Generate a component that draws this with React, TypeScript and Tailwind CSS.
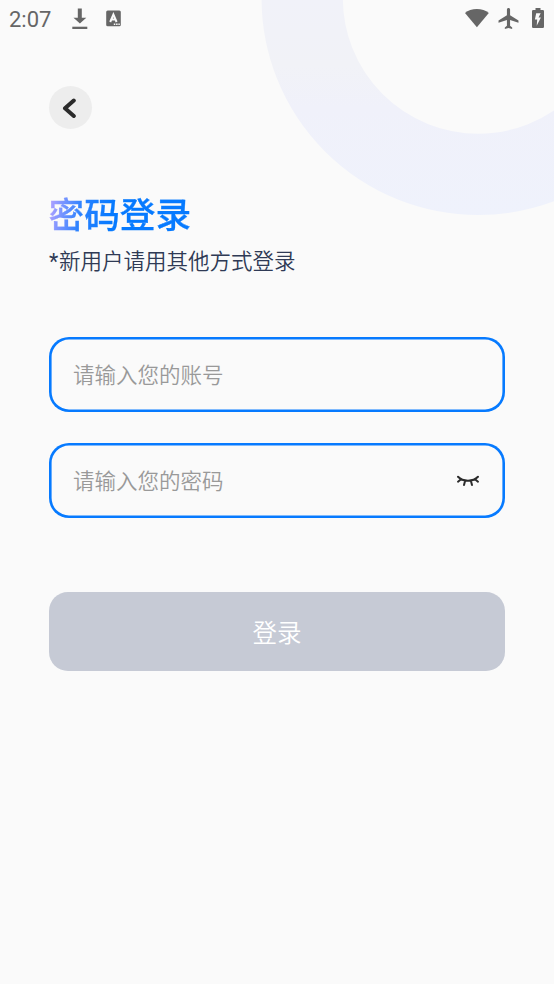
import { useState } from "react";

function StatusBar() {
  return (
    <div className="relative flex h-10 items-start text-[#666666]">
      <span className="ml-[9px] mt-1.5 w-[43px] font-[Roboto,sans-serif] text-[22px] leading-7">
        2:07
      </span>

      <svg className="ml-5 mt-2 h-[22px] w-4" viewBox="0 0 16 22" fill="currentColor">
        <path d="M5.800 0.500h4v9.200h4.500L7.900 15.600 1.500 9.700h4.300z" />
        <path d="M0.300 18.700h15v2.300h-15z" />
      </svg>

      <svg className="ml-[18px] mt-2.5 h-[17px] w-[15px]" viewBox="0 0 15 17">
        <rect x="0.2" y="0.4" width="14.6" height="15.8" rx="1.5" fill="currentColor" />
        <path d="M4.200 12L7.400 4.600 10.600 12M5.300 9.500h4.200" fill="none" stroke="#fafafa" strokeWidth="2" />
        <path d="M7.800 13.600h1.500v1.300H7.800zM10.100 13.600h1.500v1.300h-1.500zM12.400 13.600h1.400v1.300h-1.400z" fill="#fafafa" />
      </svg>

      <div className="ml-auto mr-[10px] mt-2 flex items-start">
        <svg className="h-5 w-[25px]" viewBox="0 0 25 20" fill="currentColor">
          <path d="M0 4.900C5.500 -0.200 18 -0.200 23.800 4.900L11.900 19.200z" />
        </svg>
        <svg className="ml-2 mr-px h-[21px] w-[21px]" viewBox="2 2 19 20" fill="currentColor">
          <path d="M21 16v-2l-8-5V3.500c0-.83-.67-1.500-1.500-1.500S10 2.670 10 3.500V9l-8 5v2l8-2.500V19l-2 1.500V22l3.500-1 3.500 1v-1.500L13 19v-5.500l8 2.500z" />
        </svg>
        <svg className="ml-3 h-5 w-3" viewBox="0 0 12 20" fill="currentColor">
          <path
            fillRule="evenodd"
            d="M3.500 0h5v2h2.300q1.200 0 1.200 1.200v15.600q0 1.200-1.200 1.200H1.200Q0 20 0 18.800V3.200Q0 2 1.200 2H3.500zM4.200 5.300L2.900 11.600H5.200L4.700 17.700 8.900 9.600H6.500L8.700 5.300z"
          />
        </svg>
      </div>
    </div>
  );
}

function Ring() {
  return (
    <svg className="pointer-events-none absolute right-0 top-0 h-[230px] w-[304px]" viewBox="250 0 304 230">
      <defs>
        <linearGradient id="ring" gradientUnits="userSpaceOnUse" x1="0" y1="0" x2="0" y2="215">
          <stop offset="0" stopColor="#f1f2f9" />
          <stop offset="0.3" stopColor="#f1f2f7" />
          <stop offset="0.5" stopColor="#f0f1fa" />
          <stop offset="1" stopColor="#eff2fc" />
        </linearGradient>
      </defs>
      <circle cx="478.2" cy="-1.7" r="176" fill="none" stroke="url(#ring)" strokeWidth="81.3" />
    </svg>
  );
}

function ClosedEye() {
  return (
    <svg
      className="h-3 w-6"
      viewBox="0 0 24 12"
      fill="none"
      stroke="#2b2b2b"
      strokeWidth="2"
      strokeLinecap="round"
    >
      <path d="M2 1.800C7 7 17 7 22 1.800M5 4.200L2 6.700M19 4.200L22 6.700M9.200 5.600L8 10M14.800 5.600L16 10" />
    </svg>
  );
}

const fieldClass =
  "flex h-[75px] items-center rounded-[20px] pl-6 pr-[25px] shadow-[inset_0_0_0_2.6px_#067aff]";
const inputClass =
  "min-w-0 flex-1 bg-transparent text-[21.5px] font-[350] text-[#222222] outline-none placeholder:text-[#999999]";

function App() {
  const [account, setAccount] = useState("");
  const [password, setPassword] = useState("");
  const [visible, setVisible] = useState(false);

  return (
    <div className="relative h-[984px] w-[554px] overflow-hidden bg-[#fafafa] font-['Noto_Sans_CJK_SC',sans-serif]">
      <Ring />
      <StatusBar />

      <main className="relative px-[49px] pt-[46px]">
        <button className="flex h-[43px] w-[43px] items-center justify-center rounded-full bg-[#ededed]">
          <svg
            className="mr-[3px] h-5 w-3.5"
            viewBox="0 0 14 20"
            fill="none"
            stroke="#2b2b2b"
            strokeWidth="4"
            strokeLinecap="round"
            strokeLinejoin="round"
          >
            <path d="M11.800 2.500L3 10.300 11.800 18" />
          </svg>
        </button>

        <h1 className="-ml-[0.5px] mt-[57px] h-[54px] w-fit bg-[linear-gradient(100deg,#aca0ff_3%,#2b82ff_24%,#067aff_45%)] bg-clip-text text-[35.7px] font-medium leading-[54px] text-transparent [-webkit-text-stroke:0.3px_transparent]">
          密码登录
        </h1>
        <p className="mt-1 h-8 text-[21.5px] font-[350] leading-8 text-[#2f3a55]">
          <span className="inline-block w-2.5 font-[Roboto,sans-serif] font-normal">*</span>
          新用户请用其他方式登录
        </p>

        <div className={"mt-[61px] " + fieldClass}>
          <input
            className={inputClass}
            placeholder="请输入您的账号"
            value={account}
            onChange={(e) => setAccount(e.target.value)}
          />
        </div>

        <div className={"mt-[31px] " + fieldClass}>
          <input
            className={inputClass}
            type={visible ? "text" : "password"}
            placeholder="请输入您的密码"
            value={password}
            onChange={(e) => setPassword(e.target.value)}
          />
          <button onClick={() => setVisible(!visible)}>
            <ClosedEye />
          </button>
        </div>

        <button className="mt-[74px] h-[79px] w-full rounded-[19px] bg-[#c6cad5] pt-0.5 text-[24.5px] font-[350] text-white">
          登录
        </button>
      </main>
    </div>
  );
}

export default App;
